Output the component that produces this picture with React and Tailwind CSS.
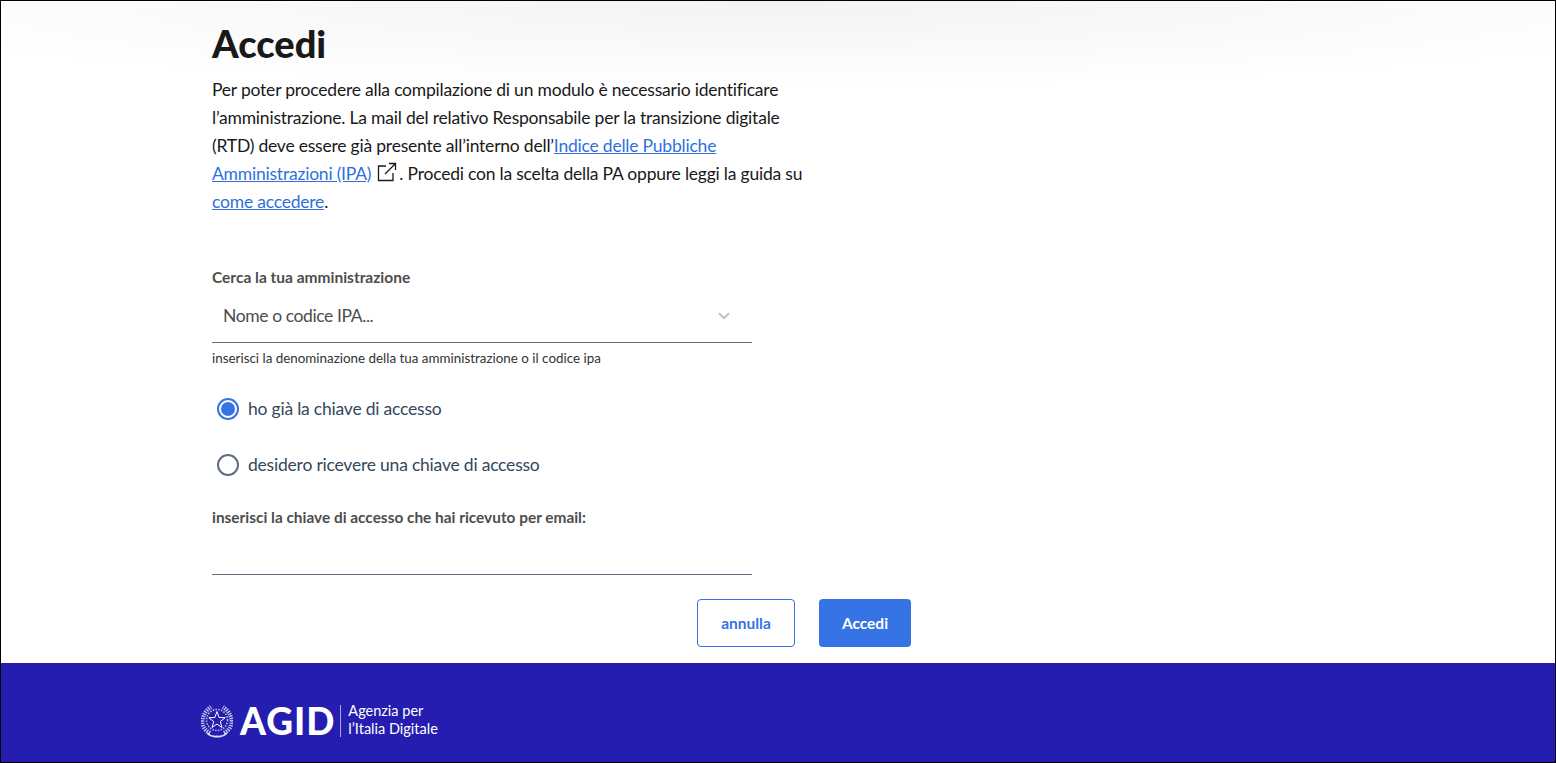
import React from 'react';
import { ChevronDown } from 'lucide-react';

const font = "font-['Lato','Liberation_Sans',sans-serif]";

const Emblem = () => (
    <svg width="32" height="36" viewBox="0 0 32 36" fill="none" stroke="#fff" className="shrink-0">
        <path d="M9 30C3 27 1 22 1.5 17S5 7 10 4" strokeWidth="4" strokeDasharray="1.4 1" opacity="0.75" />
        <path d="M23 30c6-3 8-8 7.500-13S27 7 22 4" strokeWidth="4" strokeDasharray="1.4 1" opacity="0.75" />
        <circle cx="16" cy="17" r="10.500" strokeWidth="1.600" strokeDasharray="1.500 1.300" opacity="0.7" />
        <path d="M16 8.500l2.100 6 6.100.2-4.900 3.800 1.700 6-5-3.500-5 3.500 1.700-6-4.900-3.800 6.100-.2z" strokeWidth="1" />
        <path d="M6 30c3 3 6.500 4 10 3.400 3.500.6 7-.4 10-3.400" strokeWidth="1.600" opacity="0.85" />
    </svg>
);

const Radio = ({ checked, label }) => (
    <label className="flex h-7 items-center">
        <span className={`ml-[5px] flex h-[22px] w-[22px] items-center justify-center rounded-full border-2 ${checked ? 'border-[#3673e5]' : 'border-[#5c6f82]'}`}>
            {checked && <span className="h-[14px] w-[14px] rounded-full bg-[#3673e5]" />}
        </span>
        <span className="ml-[9px] text-[17.5px] tracking-[-0.21px] text-[#33485c]">{label}</span>
    </label>
);

const App = () => {
    return (
        <div className={`flex h-[763px] flex-col border border-black bg-white ${font}`}>
            <main className="flex-1 bg-[radial-gradient(ellipse_1000px_90px_at_50%_0,#f3f3f3,#ffffff)] pl-[211px]">
                <h1 className="pt-[18px] text-[38px] leading-[48px] font-black text-[#191919]">Accedi</h1>
                <p className="mt-[9px] text-[17.5px] leading-7 tracking-[-0.21px] text-[#19191a]">
                    Per poter procedere alla compilazione di un modulo è necessario identificare<br />
                    l’amministrazione. La mail del relativo Responsabile per la transizione digitale<br />
                    (RTD) deve essere già presente all’interno dell’<a href="#" className="text-[#2f6fdf] underline">Indice delle Pubbliche<br />
                    Amministrazioni (IPA)</a>
                    <svg width="20" height="20" viewBox="0 0 20 20" fill="none" stroke="#19191a" strokeWidth="1.3" className="mr-[2px] ml-[6px] inline-block align-[-2px]">
                        <path d="M9 4H1.5v14.5H16V11" />
                        <path d="M8 12L18.5 1.5M12 1.5h6.5V8" />
                    </svg>
                    . Procedi con la scelta della PA oppure leggi la guida su<br />
                    <a href="#" className="text-[#2f6fdf] underline">come accedere</a>.
                </p>

                <div className="mt-[51px] text-[15.5px] leading-5 font-bold text-[#4d4d4d]">Cerca la tua amministrazione</div>
                <div className="mt-[3px] flex h-[53px] w-[540px] items-center justify-between border-b border-[#5c6f82] pr-[19px] pl-[11px]">
                    <span className="text-[17.5px] tracking-[-0.4px] text-[#4d4d4d]">Nome o codice IPA...</span>
                    <ChevronDown size={18} strokeWidth={2.8} className="text-[#c4c4c4]" />
                </div>
                <div className="mt-[7px] text-[13.4px] leading-4 text-[#333333]">inserisci la denominazione della tua amministrazione o il codice ipa</div>

                <div className="mt-[29px] flex flex-col gap-7">
                    <Radio checked label="ho già la chiave di accesso" />
                    <Radio label="desidero ricevere una chiave di accesso" />
                </div>

                <div className="mt-[28px] text-[15.4px] leading-5 font-bold text-[#4d4d4d]">inserisci la chiave di accesso che hai ricevuto per email:</div>
                <div className="mt-[2px] h-[46px] w-[540px] border-b border-[#5c6f82]" />

                <div className="mt-6 flex w-[699px] justify-end gap-6">
                    <button className="h-12 w-[98px] rounded border border-[#3673e5] bg-white pt-px text-[15.5px] font-bold text-[#3673e5]">annulla</button>
                    <button className="h-12 w-[92px] rounded bg-[#3673e5] pt-px text-[15.5px] font-bold text-white">Accedi</button>
                </div>
            </main>

            <footer className="flex h-[99px] items-center bg-[#241db0] pl-[200px] pt-[16px] text-white">
                <Emblem />
                <span className="ml-[7px] text-[37px] leading-none font-black tracking-[1px]">AGID</span>
                <span className="ml-[5px] h-8 w-px bg-white/60" />
                <span className="-mt-[2px] ml-[7px] text-[14.5px] leading-[18px]">Agenzia per<br />l’Italia Digitale</span>
            </footer>
        </div>
    );
};

export default App;
